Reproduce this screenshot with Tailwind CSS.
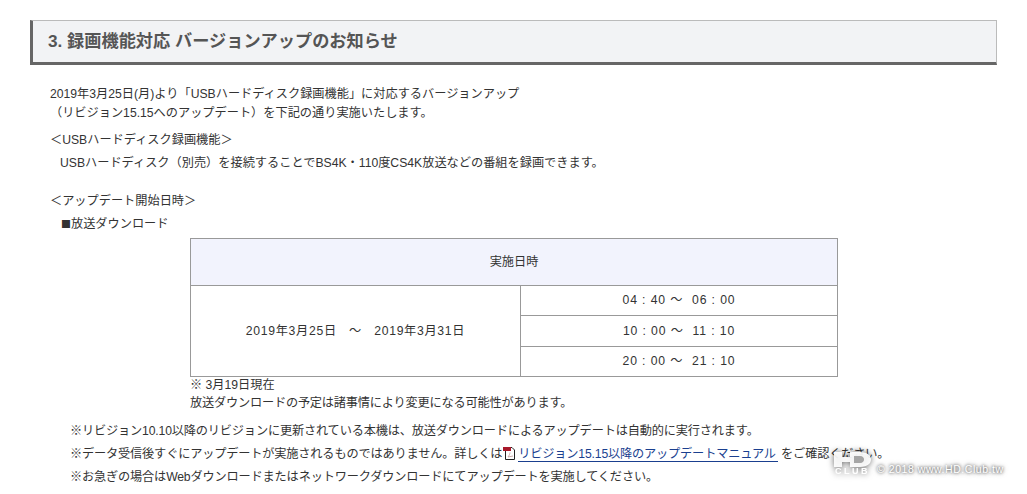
<!DOCTYPE html>
<html lang="ja">
<head>
  <meta charset="UTF-8">
  <title>バージョンアップのお知らせ</title>
  <script src="https://cdn.jsdelivr.net/npm/@tailwindcss/browser@4"></script>
</head>
<body class="bg-white overflow-hidden">
<div class="relative h-[494px] w-[1027px] overflow-hidden pt-[20px] pl-[30px] text-[12.2px] leading-[19px] text-[#333] font-['Liberation_Sans','Noto_Sans_CJK_JP',sans-serif]">
  <!-- Heading -->
  <h2 class="w-[967px] h-[45px] flex items-center pl-[15px] bg-[#f2f3f5] border-t border-r border-[#bbb] border-l-[3px] border-l-[#666] border-b-[3px] border-b-[#666] text-[17.2px] font-bold text-[#555]">3. 録画機能対応 バージョンアップのお知らせ</h2>

  <div class="pl-[20px] pt-[20px]">
    <p>2019年3月25日(月)より「USBハードディスク録画機能」に対応するバージョンアップ<br>（リビジョン15.15へのアップデート）を下記の通り実施いたします。</p>
    <p class="mt-[8px]">＜USBハードディスク録画機能＞</p>
    <p class="mt-[4px] pl-[10px]">USBハードディスク（別売）を接続することでBS4K・110度CS4K放送などの番組を録画できます。</p>
    <p class="mt-[19px]">＜アップデート開始日時＞</p>
    <p class="mt-[4px] pl-[11px]"><span class="font-['Noto_Sans_CJK_JP',sans-serif] text-[10px] leading-none">■</span>放送ダウンロード</p>

    <!-- Schedule table -->
    <div class="ml-[140px] mt-[4px] w-[648px]">
      <table class="w-full table-fixed border-collapse text-center">
        <colgroup><col class="w-[330px]"><col></colgroup>
        <tbody>
          <tr class="h-[47px]">
            <th colspan="2" class="border border-[#999] bg-[#f2f3fd] font-normal">実施日時</th>
          </tr>
          <tr class="h-[30px]">
            <td rowspan="3" class="border border-[#999] tracking-[0.7px]">2019年3月25日 &nbsp; 〜 &nbsp; 2019年3月31日</td>
            <td class="border border-[#999] tracking-[0.9px]">04 : 40 〜&nbsp; 06 : 00</td>
          </tr>
          <tr class="h-[31px]"><td class="border border-[#999] tracking-[0.9px]">10 : 00 〜&nbsp; 11 : 10</td></tr>
          <tr class="h-[30px]"><td class="border border-[#999] tracking-[0.9px]">20 : 00 〜&nbsp; 21 : 10</td></tr>
        </tbody>
      </table>
      <p class="leading-[18px] -mt-[1px]">※ 3月19日現在</p>
      <p class="leading-[18px] tracking-[-0.2px]">放送ダウンロードの予定は諸事情により変更になる可能性があります。</p>
    </div>

    <!-- Notes -->
    <ul class="mt-[10px] pl-[20px] space-y-[4px] tracking-[-0.17px]">
      <li>※リビジョン10.10以降のリビジョンに更新されている本機は、放送ダウンロードによるアップデートは自動的に実行されます。</li>
      <li>※データ受信後すぐにアップデートが実施されるものではありません。詳しくは<svg class="inline-block align-[-3px]" width="16" height="15" viewBox="0 0 16 15">
          <path d="M3.500 1.500H10L12.500 4V13.500H3.500Z" fill="#fff" stroke="#222"/>
          <rect x="1" y="1" width="8" height="4" fill="#a8182a"/>
          <path d="M6 11C7.500 9 8 7.500 8 6.500M6 11L11 10" fill="none" stroke="#c9a9a9"/>
        </svg><a href="#" class="text-[#1a3f8f] border-b border-[#1a3f8f] pr-[2px]">リビジョン15.15以降のアップデートマニュアル</a> をご確認ください。</li>
      <li>※お急ぎの場合はWebダウンロードまたはネットワークダウンロードにてアップデートを実施してください。</li>
    </ul>
  </div>

  <!-- Watermark -->
  <div class="absolute left-[833px] top-[452px] flex items-end gap-[5px]">
    <div class="flex flex-col items-center leading-none drop-shadow-[0_0_3px_rgba(0,0,0,0.65)]">
      <svg width="39" height="15" viewBox="0 0 39 15">
        <path d="M1 0H9V5H17V0H27C35 0 38 4 38 7.500C38 11 35 15 27 15H17V10H9V15H1Z" fill="#fff" fill-opacity="0.92"/>
        <path d="M21 4H27C30 4 31 6 31 7.500C31 9 30 11 27 11H21Z" fill="#a5a5a5"/>
      </svg>
      <span class="mt-[1px] text-[9px] h-[7px] leading-[7px] tracking-[2.5px] font-bold text-white">CLUB</span>
    </div>
    <span class="text-[10.5px] leading-[12px] tracking-[0.55px] text-white [text-shadow:0_0_3px_#444,0_0_5px_#777]">© 2018 www.HD.Club.tw</span>
  </div>
</div>
</body>
</html>
